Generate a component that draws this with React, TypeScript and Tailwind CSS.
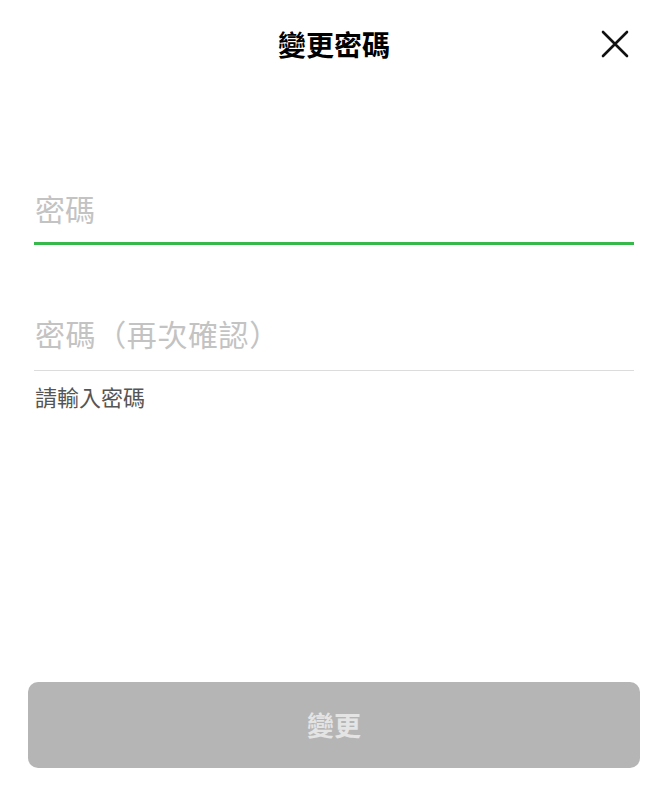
import { useState } from 'react';

const FONT = { fontFamily: '"Noto Sans CJK TC", "Noto Sans", sans-serif' };

export default function App() {
  const [pw, setPw] = useState('');
  const [pw2, setPw2] = useState('');

  return (
    <div className="flex min-h-[801px] flex-col bg-white text-[#111]" style={FONT}>
      {/* Header */}
      <div className="grid h-[88px] grid-cols-[1fr_auto_1fr] items-center">
        <div />
        <h1 className="text-[28px] font-bold leading-none text-black">變更密碼</h1>
        <div className="flex justify-end pr-[38px]">
          <button className="flex h-[30px] w-[30px] items-center justify-center">
            <svg width="28" height="28" viewBox="0 0 28 28" fill="none" stroke="#111" strokeWidth="2.6" strokeLinecap="round">
              <path d="M2 2 L26 26 M26 2 L2 26" />
            </svg>
          </button>
        </div>
      </div>

      <div className="mt-[92px] px-[34px]">
        <div className="flex h-[65px] items-center border-b-[3px] border-[#36b84b] pb-[6px]">
          <input
            type="password"
            value={pw}
            onChange={e => setPw(e.target.value)}
            placeholder="密碼"
            className="w-full bg-transparent pl-[1px] text-[30px] outline-none placeholder:text-[#c3c3c3]"
          />
        </div>

        <div className="mt-[59px] flex h-[67px] items-center border-b border-[#dcdcdc] pb-[7px]">
          <input
            type="password"
            value={pw2}
            onChange={e => setPw2(e.target.value)}
            placeholder="密碼（再次確認）"
            className="w-full bg-transparent pl-[1px] text-[30px] tracking-[0.6px] outline-none placeholder:text-[#c3c3c3]"
          />
        </div>

        <p className="mt-[11px] pl-[1px] text-[22px] leading-[28px] text-[#555]">請輸入密碼</p>
      </div>

      <button className="mx-[28px] mb-[33px] mt-auto h-[86px] rounded-[10px] bg-[#b5b5b5] text-[27px] font-bold text-[#e4e4e4]">
        變更
      </button>
    </div>
  );
}
